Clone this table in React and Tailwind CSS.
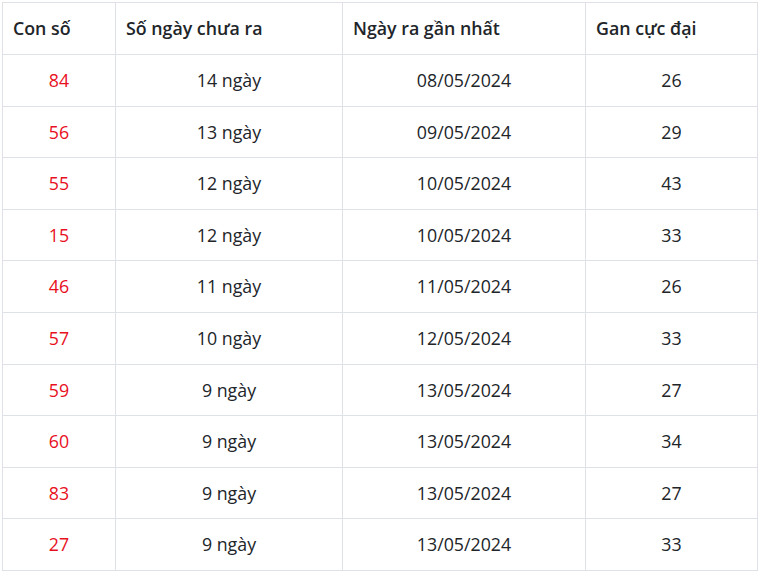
import React from "react";

const rows = [
  ["84", "14 ngày", "08/05/2024", "26"],
  ["56", "13 ngày", "09/05/2024", "29"],
  ["55", "12 ngày", "10/05/2024", "43"],
  ["15", "12 ngày", "10/05/2024", "33"],
  ["46", "11 ngày", "11/05/2024", "26"],
  ["57", "10 ngày", "12/05/2024", "33"],
  ["59", "9 ngày", "13/05/2024", "27"],
  ["60", "9 ngày", "13/05/2024", "34"],
  ["83", "9 ngày", "13/05/2024", "27"],
  ["27", "9 ngày", "13/05/2024", "33"],
];

const App = () => {
  return (
    <div
      className="p-[2px] bg-white text-[#212529]"
      style={{ fontFamily: '"Open Sans", "Noto Sans", sans-serif' }}
    >
      <table className="w-[755px] table-fixed border-collapse text-[17.8px]">
        <colgroup>
          <col className="w-[113px]" />
          <col className="w-[227px]" />
          <col className="w-[243px]" />
          <col className="w-[172px]" />
        </colgroup>
        <thead>
          <tr className="h-[52px]">
            <th className="border border-[#dee2e6] px-[10px] text-left font-semibold">
              Con số
            </th>
            <th className="border border-[#dee2e6] px-[10px] text-left font-semibold">
              Số ngày chưa ra
            </th>
            <th className="border border-[#dee2e6] px-[10px] text-left font-semibold">
              Ngày ra gần nhất
            </th>
            <th className="border border-[#dee2e6] px-[10px] text-left font-semibold">
              Gan cực đại
            </th>
          </tr>
        </thead>
        <tbody>
          {rows.map((r, i) => (
            <tr key={i} className="h-[51.6px]">
              <td className="border border-[#dee2e6] text-center text-[#e8101e]">
                {r[0]}
              </td>
              <td className="border border-[#dee2e6] text-center">{r[1]}</td>
              <td className="border border-[#dee2e6] text-center">{r[2]}</td>
              <td className="border border-[#dee2e6] text-center">{r[3]}</td>
            </tr>
          ))}
        </tbody>
      </table>
    </div>
  );
};

export default App;
